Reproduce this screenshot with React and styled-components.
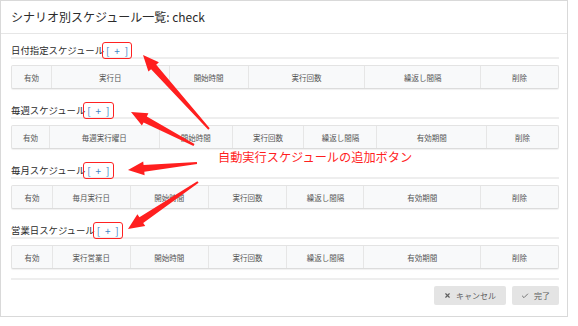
import React from 'react';
import styled, { createGlobalStyle } from 'styled-components';
import { X, Check } from 'lucide-react';

const GlobalStyle = createGlobalStyle`
  html, body {
    margin: 0;
    padding: 0;
    background: #fff;
  }
  body {
    font-family: "Noto Sans CJK JP", "Noto Sans", sans-serif;
    color: #333;
  }
`;

const Page = styled.div`
  position: relative;
  width: 578px;
  height: 326px;
  overflow: hidden;
`;

const Modal = styled.div`
  width: 568px;
  box-sizing: border-box;
  border: 1px solid #d9d9d9;
  background: #fff;
`;

const Header = styled.div`
  height: 32px;
  display: flex;
  align-items: center;
  padding: 0 10px;
  border-bottom: 1px solid #e6e6e6;
`;

const Title = styled.h1`
  margin: 0;
  font-size: 12px;
  font-weight: 400;
  color: #2b2b2b;
  line-height: 1;
`;

const Body = styled.div`
  padding: 9px 8px 0 10px;
`;

const Section = styled.section`
  & + & {
    margin-top: 14px;
  }
`;

const Heading = styled.div`
  height: 14px;
  display: flex;
  align-items: center;
  border-bottom: 2px solid #eeeeee;
  font-size: 9.4px;
  color: #2b2b2b;
`;

const Callout = styled.span`
  display: inline-flex;
  align-items: center;
  height: 17px;
  box-sizing: border-box;
  margin-left: -2px;
  padding: 0 2px 0 3px;
  border: 1.5px solid #f22;
  border-radius: 3px;
  position: relative;
  z-index: 1;
`;

const AddLink = styled.a`
  color: #3d85c6;
  font-size: 10px;
  letter-spacing: 1.3px;
  text-decoration: none;
  cursor: pointer;
  white-space: pre;
`;

const Table = styled.div`
  margin-top: 6px;
  display: grid;
  grid-template-columns: ${(p) => p.$cols};
  height: 24px;
  box-sizing: border-box;
  border: 1px solid #e3e3e3;
  border-bottom-color: #dcdcdc;
  border-radius: 2px;
  background: #f8f9fa;
  box-shadow: 0 1px 1px rgba(0, 0, 0, 0.06);
`;

const Cell = styled.div`
  display: flex;
  align-items: center;
  justify-content: center;
  font-size: 7.5px;
  color: #555;
  & + & {
    border-left: 1px solid #e6e6e6;
  }
`;

const Footer = styled.div`
  margin-top: 9px;
  border-top: 2px solid #eeeeee;
  padding: 6px 0 11px;
  display: flex;
  justify-content: flex-end;
  gap: 6px;
`;

const Button = styled.button`
  height: 19px;
  padding: 0 ${(p) => (p.$wide ? 10 : 9)}px;
  display: inline-flex;
  align-items: center;
  gap: 5px;
  border: none;
  border-radius: 2px;
  background: #e4e4e4;
  color: #5f5f5f;
  font-family: inherit;
  font-size: 8px;
`;

const Note = styled.div`
  position: absolute;
  left: 218px;
  top: 149px;
  font-size: 12.2px;
  color: #ff1f1f;
  line-height: 16px;
  white-space: nowrap;
`;

const Overlay = styled.svg`
  position: absolute;
  left: 0;
  top: 0;
  pointer-events: none;
`;

const sections = [
  {
    name: '日付指定スケジュール',
    cols: '39fr 118fr 79fr 117fr 116fr 78fr',
    heads: ['有効', '実行日', '開始時間', '実行回数', '繰返し間隔', '削除'],
  },
  {
    name: '毎週スケジュール',
    cols: '37fr 110fr 73fr 72fr 73fr 110fr 72fr',
    heads: ['有効', '毎週実行曜日', '開始時間', '実行回数', '繰返し間隔', '有効期間', '削除'],
  },
  {
    name: '毎月スケジュール',
    cols: '40fr 78fr 78fr 79fr 77fr 117fr 78fr',
    heads: ['有効', '毎月実行日', '開始時間', '実行回数', '繰返し間隔', '有効期間', '削除'],
  },
  {
    name: '営業日スケジュール',
    cols: '40fr 78fr 78fr 79fr 77fr 117fr 78fr',
    heads: ['有効', '実行営業日', '開始時間', '実行回数', '繰返し間隔', '有効期間', '削除'],
  },
];

// tapered annotation arrow, thin at the tail and a wide head at the tip
function arrowPoints(x1, y1, x2, y2) {
  const dx = x2 - x1;
  const dy = y2 - y1;
  const len = Math.hypot(dx, dy);
  const ux = dx / len;
  const uy = dy / len;
  const nx = -uy;
  const ny = ux;
  const headLen = 16;
  const headW = 14;
  const tail = 1;
  const neck = 3.4;
  const bx = x2 - ux * headLen;
  const by = y2 - uy * headLen;
  const pts = [
    [x1 + nx * tail, y1 + ny * tail],
    [bx + nx * neck, by + ny * neck],
    [bx + nx * headW / 2, by + ny * headW / 2],
    [x2, y2],
    [bx - nx * headW / 2, by - ny * headW / 2],
    [bx - nx * neck, by - ny * neck],
    [x1 - nx * tail, y1 - ny * tail],
  ];
  return pts.map((p) => p.map((v) => v.toFixed(1)).join(',')).join(' ');
}

const arrows = [
  [209, 129, 143, 55],
  [194, 145, 131, 112],
  [197, 163, 128, 170],
  [198, 182, 128, 229],
];

export default function App() {
  return (
    <Page>
      <GlobalStyle />
      <Modal>
        <Header>
          <Title>シナリオ別スケジュール一覧: check</Title>
        </Header>
        <Body>
          {sections.map((s) => (
            <Section key={s.name}>
              <Heading>
                {s.name}
                <Callout>
                  <AddLink>[ + ]</AddLink>
                </Callout>
              </Heading>
              <Table $cols={s.cols}>
                {s.heads.map((h) => (
                  <Cell key={h}>{h}</Cell>
                ))}
              </Table>
            </Section>
          ))}
          <Footer>
            <Button $wide>
              <X size={7} strokeWidth={4} />
              キャンセル
            </Button>
            <Button>
              <Check size={8} strokeWidth={2.5} />
              完了
            </Button>
          </Footer>
        </Body>
      </Modal>
      <Note>自動実行スケジュールの追加ボタン</Note>
      <Overlay width="578" height="326" viewBox="0 0 578 326">
        {arrows.map((a, i) => (
          <polygon key={i} points={arrowPoints(...a)} fill="#ff1f1f" />
        ))}
      </Overlay>
    </Page>
  );
}
